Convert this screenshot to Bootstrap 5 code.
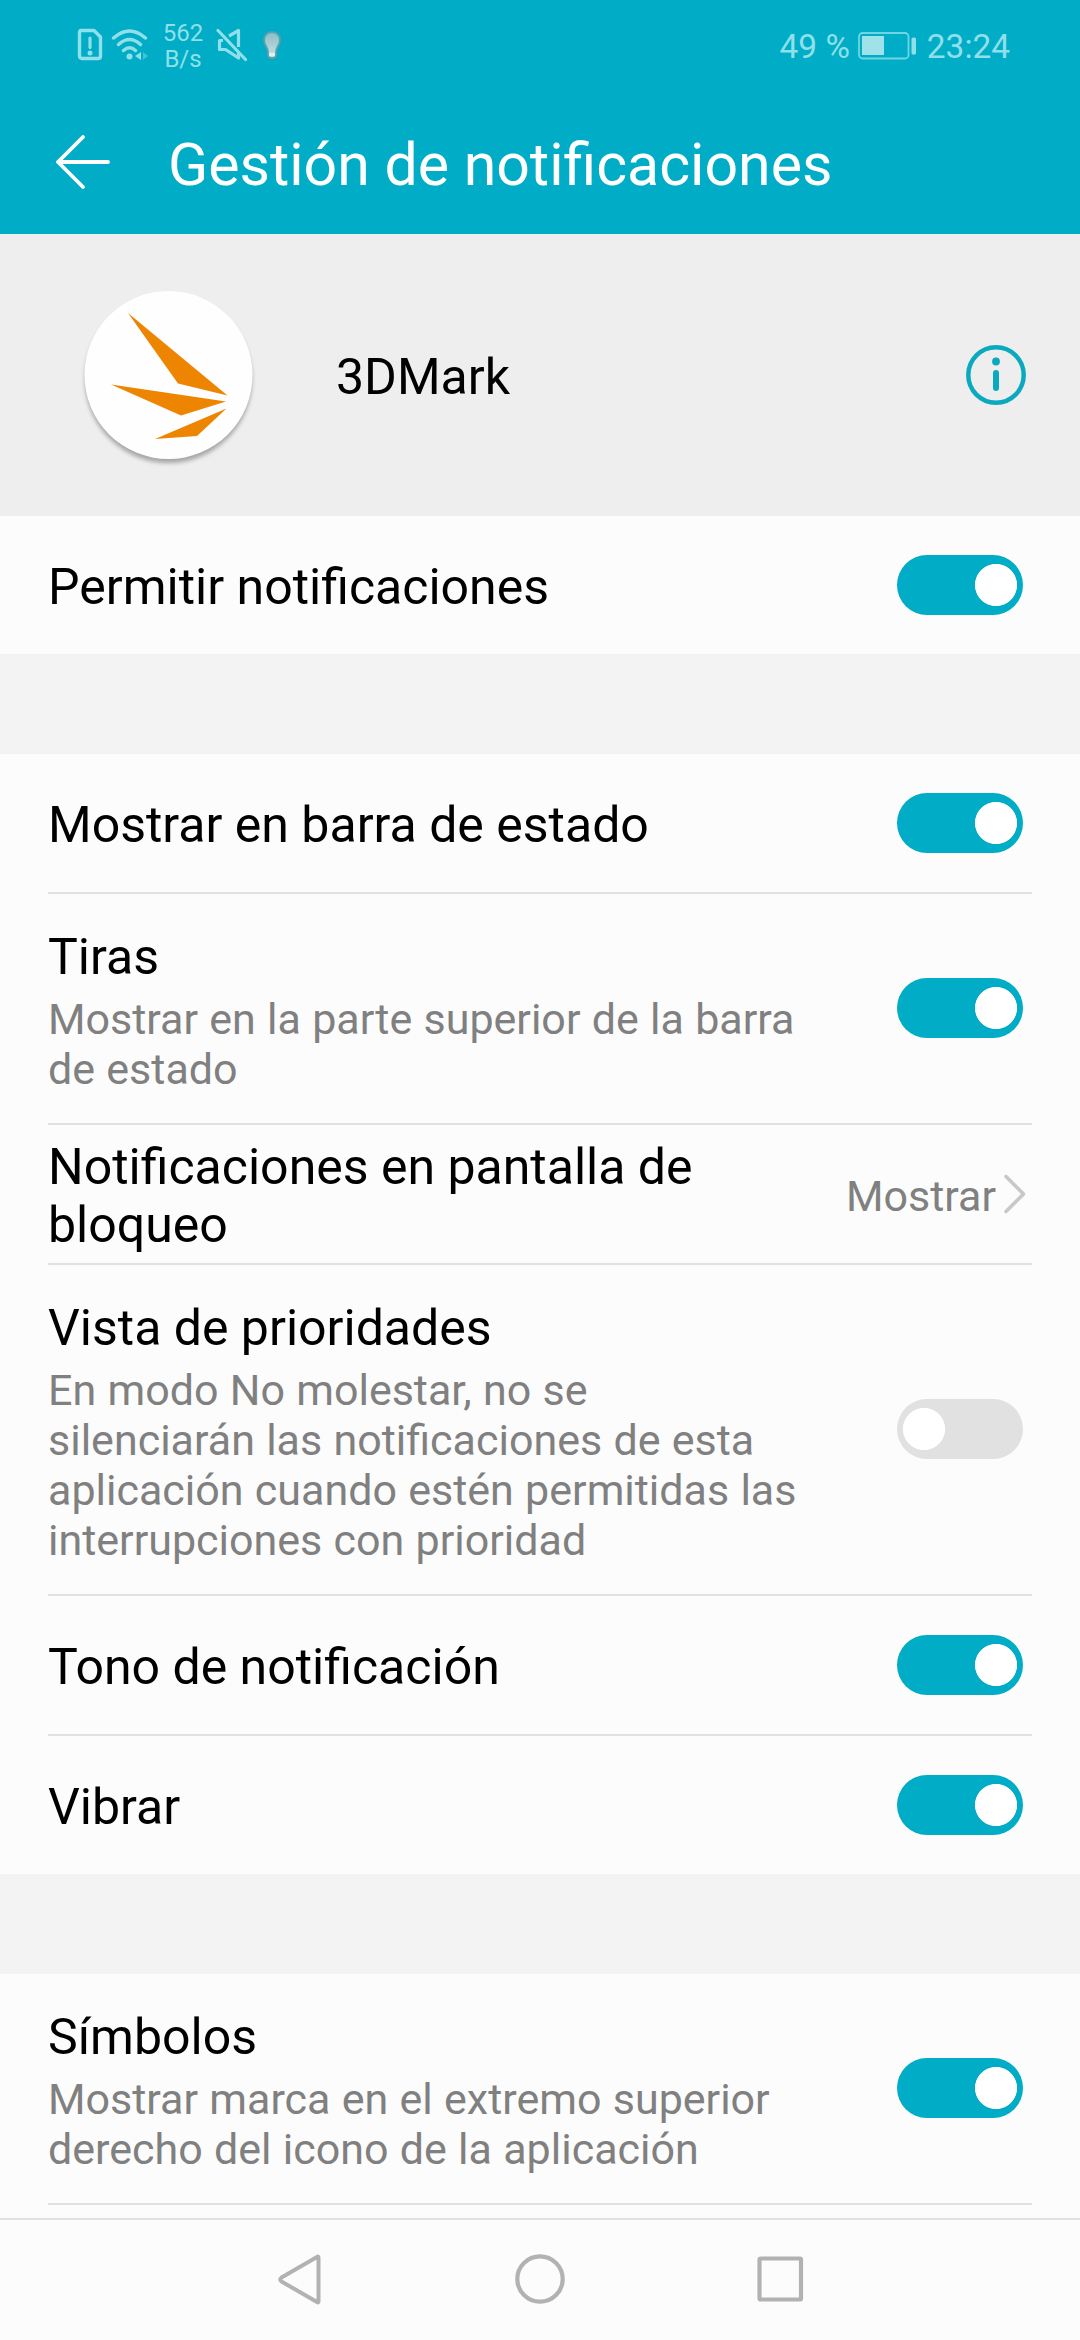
<!DOCTYPE html>
<html lang="es">
<head>
<meta charset="utf-8">
<meta name="viewport" content="width=device-width, initial-scale=1">
<title>Gestión de notificaciones</title>
<link href="https://cdn.jsdelivr.net/npm/bootstrap@5.3.0/dist/css/bootstrap.min.css" rel="stylesheet">
<style>
:root{--teal:#00acc6;--soft:#90e0ea;--surface:#fcfcfc;--line:#e1e1e1}
body{font-family:Roboto,"Noto Sans",sans-serif;background:#f3f3f3;color:#000}
svg{display:block;flex:none}
.screen{width:1080px;height:2340px}
.top-area{background:var(--teal);height:234px}
.status{height:90px;color:var(--soft);padding:0 70px 0 77px}
.speed{font-size:24px;line-height:26px;width:52px;margin:1px 0 0 8px}
.status-text{font-size:33.4px;line-height:40px}
.clock{padding-top:3px}
.ico-wifi{margin-left:8px}
.ico-mute{margin-left:7px}
.ico-bulb{margin-left:14px}
.ico-battery{margin:1px 9px 0 8px}
.ico-chevron{margin:0 -5px 0 6px}
.title-bar{height:144px;padding-left:56px}
.title-text{font-size:59px;line-height:70px;margin:5px 0 0 58px}
.app-head{background:#eee;height:282px;padding:0 54px 0 80px}
.app-name{font-size:50px;line-height:58px;padding-top:3px;margin-left:80px}
.group{background:var(--surface);padding:0 48px}
.group + .group{margin-top:100px}
.item{height:138px;padding-right:9px}
.item + .item,.rule{border-top:2px solid var(--line);height:140px}
.item.two-line{height:229px}
.item + .item.two-line{height:231px}
.item + .item.four-line{height:331px}
.labels{padding-top:4px}
.two-line .labels,.four-line .labels{padding-top:5px}
.label-main{font-size:50px;line-height:58px;white-space:nowrap}
.label-sub{font-size:43px;line-height:50px;color:#808080;margin:8px 0 1px;white-space:nowrap;word-spacing:.6px}
.value{font-size:43px;line-height:50px;color:#808080;padding-top:4px}
.form-check-input.toggle{width:126px;height:60px;margin:0;border:0;border-radius:30px;background-color:var(--line);background-image:radial-gradient(circle at 27px 30px,#fff 20.7px,transparent 21.4px);background-size:100% 100%;background-position:0 0;flex:none;opacity:1}
.form-check-input.toggle:checked{background-color:var(--teal);background-image:radial-gradient(circle at 99px 30px,#fff 20.7px,transparent 21.4px)}
.two-line .form-check-input.toggle,.four-line .form-check-input.toggle{margin-bottom:1px}
.last-group{height:244px}
.last-group .rule{height:13px}
.nav-keys{height:122px;background:var(--surface);border-top:2px solid var(--line)}
</style>
</head>
<body>
<div class="screen d-flex flex-column overflow-hidden">
  <header class="top-area">
    <div class="status d-flex align-items-center justify-content-between">
      <div class="d-flex align-items-center">
        <svg width="26" height="34" viewBox="0 0 26 34" fill="none" stroke="#90e0ea"><path d="M4 2.500H17L23.500 9V28Q23.500 30.500 21 30.500H5Q2.500 30.500 2.500 28V5Q2.500 2.500 4 2.500Z" stroke-width="3.400" stroke-linejoin="round"/><path d="M13 10V19.500" stroke-width="3.200" stroke-linecap="round"/><circle cx="13" cy="25" r="2.500" fill="#90e0ea" stroke="none"/></svg>
        <svg class="ico-wifi" width="38" height="34" viewBox="0 0 38 34" fill="none" stroke="#90e0ea" stroke-width="3.400" stroke-linecap="round"><path d="M2.500 10Q18.500-4 34.500 10M7.500 16.500Q18.500 6.500 29.500 16.500M12.500 22.500Q18.500 17 24.500 22.500"/><g stroke="none" fill="#90e0ea"><circle cx="18.500" cy="28.500" r="3"/><path d="M30 24V32L24 28Z"/><path d="M32 24V32L37 28Z" opacity=".45"/></g></svg>
        <div class="speed text-center">562<br>B/s</div>
        <svg class="ico-mute" width="32" height="34" viewBox="0 0 32 34" fill="none" stroke="#90e0ea" stroke-width="3.200" stroke-linejoin="round"><path d="M2 2.500L29.500 31.500" stroke-linecap="round"/><path d="M13 8L22.500 2.500V19M7 12.500H3.500V21.500H9.500L22.500 30V25"/></svg>
        <svg class="ico-bulb" width="20" height="34" viewBox="0 0 20 34"><defs><linearGradient id="bulb" x2="0" y2="1"><stop stop-color="#88bdc5"/><stop offset="1" stop-color="#cbe3e6"/></linearGradient></defs><path d="M10 4C5 4 2 7.500 2 12C2 17 6 19 6 24V27Q6 30 10 30Q14 30 14 27V24C14 19 18 17 18 12C18 7.500 15 4 10 4Z" fill="url(#bulb)" stroke="#58a2ac" stroke-width="1.800"/><path d="M7 25H13V28H7Z" fill="#e5eeee"/></svg>
      </div>
      <div class="d-flex align-items-center status-text">
        <span class="clock">49 %</span>
        <svg class="ico-battery" width="60" height="30" viewBox="0 0 60 30"><rect x="1" y="2" width="49.500" height="25.500" rx="3.500" fill="none" stroke="#70d5e2" stroke-width="1.800"/><path d="M4 5H26V24H4Z" fill="#a0e2ea"/><rect x="53.500" y="6.500" width="4.500" height="17" rx="1.500" fill="#90e0ea"/></svg>
        <span class="clock">23:24</span>
      </div>
    </div>
    <div class="title-bar d-flex align-items-center text-white">
      <svg width="54" height="56" viewBox="0 0 54 56" fill="none" stroke="#fff" stroke-width="3.800" stroke-linecap="round" stroke-linejoin="round"><path d="M27 3L2 28L27 53M2 28H52"/></svg>
      <h1 class="title-text fw-normal mb-0">Gestión de notificaciones</h1>
    </div>
  </header>

  <section class="app-head d-flex align-items-center">
    <svg width="176" height="188" viewBox="0 0 176 188"><defs><filter id="sh" x="-10%" y="-10%" width="120%" height="125%"><feGaussianBlur stdDeviation="2"/></filter></defs><circle cx="88.500" cy="98.500" r="83.500" fill="#a6a6a6" filter="url(#sh)"/><circle cx="88.500" cy="94" r="84" fill="#fefefe"/><g fill="#ee8500"><path d="M48 32L147.500 114.500L98 102.500Z"/><path d="M31 103.500L146 120.500L101 134.500Z"/><path d="M146.500 127.500L117 155L75 158Z"/></g></svg>
    <div class="app-name me-auto">3DMark</div>
    <svg width="60" height="60" viewBox="0 0 60 60"><circle cx="30" cy="30" r="27.700" fill="none" stroke="#0ba9c0" stroke-width="4.500"/><circle cx="30" cy="16.500" r="3.900" fill="#0ba9c0"/><path d="M30 28V43" stroke="#0ba9c0" stroke-width="6" stroke-linecap="round"/></svg>
  </section>

  <section class="group">
    <div class="item d-flex align-items-center justify-content-between"><div class="labels"><div class="label-main">Permitir notificaciones</div></div><input class="form-check-input toggle" type="checkbox" role="switch" aria-label="Permitir notificaciones" checked></div>
  </section>

  <section class="group">
    <div class="item d-flex align-items-center justify-content-between"><div class="labels"><div class="label-main">Mostrar en barra de estado</div></div><input class="form-check-input toggle" type="checkbox" role="switch" aria-label="Mostrar en barra de estado" checked></div>
    <div class="item two-line d-flex align-items-center justify-content-between"><div class="labels"><div class="label-main">Tiras</div><div class="label-sub">Mostrar en la parte superior de la barra<br>de estado</div></div><input class="form-check-input toggle" type="checkbox" role="switch" aria-label="Tiras" checked></div>
    <div class="item d-flex align-items-center justify-content-between"><div class="labels"><div class="label-main">Notificaciones en pantalla de<br>bloqueo</div></div>
      <div class="d-flex align-items-center"><span class="value">Mostrar</span><svg class="ico-chevron" width="26" height="42" viewBox="0 0 26 42" fill="none" stroke="#c8c8c8" stroke-width="3.600" stroke-linecap="round" stroke-linejoin="round"><path d="M4 3.500L21.500 21L4 38.500"/></svg></div></div>
    <div class="item four-line d-flex align-items-center justify-content-between"><div class="labels"><div class="label-main">Vista de prioridades</div><div class="label-sub">En modo No molestar, no se<br>silenciarán las notificaciones de esta<br>aplicación cuando estén permitidas las<br>interrupciones con prioridad</div></div><input class="form-check-input toggle" type="checkbox" role="switch" aria-label="Vista de prioridades"></div>
    <div class="item d-flex align-items-center justify-content-between"><div class="labels"><div class="label-main">Tono de notificación</div></div><input class="form-check-input toggle" type="checkbox" role="switch" aria-label="Tono de notificación" checked></div>
    <div class="item d-flex align-items-center justify-content-between"><div class="labels"><div class="label-main">Vibrar</div></div><input class="form-check-input toggle" type="checkbox" role="switch" aria-label="Vibrar" checked></div>
  </section>

  <section class="group last-group">
    <div class="item two-line d-flex align-items-center justify-content-between"><div class="labels"><div class="label-main">Símbolos</div><div class="label-sub">Mostrar marca en el extremo superior<br>derecho del icono de la aplicación</div></div><input class="form-check-input toggle" type="checkbox" role="switch" aria-label="Símbolos" checked></div>
    <div class="rule"></div>
  </section>

  <nav class="nav-keys d-flex align-items-center justify-content-center" aria-label="Navegación">
    <svg width="240" height="60" viewBox="0 0 240 60" fill="none" stroke="#b2b2b2" stroke-width="4" stroke-linejoin="round"><path d="M138.500 7.500V51.500Q138.500 53 137 52L101.500 31.500Q99 29.500 101.500 27.500L137 7Q138.500 6 138.500 7.500Z"/></svg>
    <svg width="240" height="60" viewBox="0 0 240 60" fill="none" stroke="#b2b2b2" stroke-width="4.200"><circle cx="120" cy="29" r="22.700"/></svg>
    <svg width="240" height="60" viewBox="0 0 240 60" fill="none" stroke="#b2b2b2" stroke-width="4.200"><rect x="99.500" y="8.500" width="41.500" height="41" rx="1"/></svg>
  </nav>
</div>
<script src="https://cdn.jsdelivr.net/npm/bootstrap@5.3.0/dist/js/bootstrap.bundle.min.js"></script>
</body>
</html>
